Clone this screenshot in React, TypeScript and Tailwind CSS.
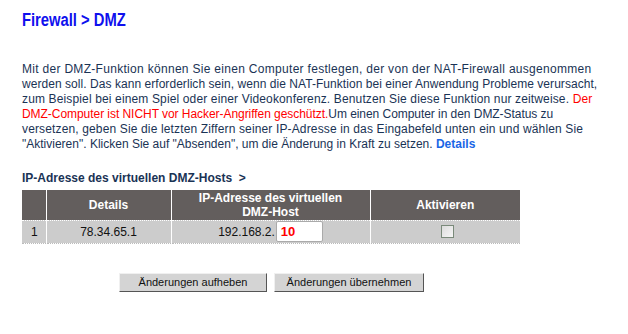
import React from "react";

export default function App() {
  return (
    <div className="w-[628px] h-[334px] bg-white overflow-hidden" style={{ fontFamily: '"Liberation Sans", Arial, sans-serif' }}>
      <div className="pl-[22px] pt-[9px]">
        <h1 className="text-[18px] leading-[22px] font-bold text-[#1010ee] origin-left scale-x-[0.82] whitespace-nowrap">Firewall &gt; DMZ</h1>
        <p className="mt-[31px] text-[12px] leading-[15px] text-[#1a3355] w-[606px] whitespace-nowrap">
          <span className="tracking-[0.3px]">Mit der DMZ-Funktion können Sie einen Computer festlegen, der von der NAT-Firewall ausgenommen</span>
          <br />
          <span className="tracking-[0.05px]">werden soll. Das kann erforderlich sein, wenn die NAT-Funktion bei einer Anwendung Probleme verursacht,</span>
          <br />
          <span className="tracking-[0.14px]">
            zum Beispiel bei einem Spiel oder einer Videokonferenz. Benutzen Sie diese Funktion nur zeitweise.{" "}
            <span className="text-[#ff0000]">Der</span>
          </span>
          <br />
          <span className="tracking-[-0.05px]">
            <span className="text-[#ff0000]">DMZ-Computer ist NICHT vor Hacker-Angriffen geschützt.</span>Um einen Computer in den DMZ-Status zu
          </span>
          <br />
          <span className="tracking-[0.14px]">versetzen, geben Sie die letzten Ziffern seiner IP-Adresse in das Eingabefeld unten ein und wählen Sie</span>
          <br />
          <span>
            "Aktivieren". Klicken Sie auf "Absenden", um die Änderung in Kraft zu setzen.{" "}
            <span className="font-bold text-[#1a66e6]">Details</span>
          </span>
        </p>
        <div className="mt-[19px] text-[12px] leading-[15px] font-bold text-[#1a3355]">
          IP-Adresse des virtuellen DMZ-Hosts&nbsp;&nbsp;&gt;
        </div>
        <table className="mt-[4px] w-[498px] border-collapse text-[12px]">
          <thead>
            <tr className="bg-[#635e5d] text-white font-bold h-[30px]">
              <th className="w-[24px] border-r border-white"></th>
              <th className="w-[125px] border-r border-white text-center leading-[14px]">Details</th>
              <th className="w-[199px] border-r border-white text-center leading-[14px] font-bold">
                IP-Adresse des virtuellen
                <br />
                DMZ-Host
              </th>
              <th className="text-center leading-[14px]">Aktivieren</th>
            </tr>
          </thead>
          <tbody>
            <tr className="bg-[#cccccc] h-[23px] text-[#111] border-t border-white border-b border-dotted border-b-[#bbbbbb]">
              <td className="border-r border-white pl-[9px]">1</td>
              <td className="border-r border-white text-center">78.34.65.1</td>
              <td className="border-r border-white">
                <div className="flex items-center justify-center">
                  <span>192.168.2.</span>
                  <div className="ml-[1px] w-[47px] h-[21px] bg-white border border-[#aaaaaa] rounded-[2px] flex items-center pl-[4px] text-[#ff0000] font-bold text-[13px]">
                    10
                  </div>
                </div>
              </td>
              <td>
                <div className="flex justify-center">
                  <div className="w-[13px] h-[13px] border border-[#7a8a7a] bg-gradient-to-br from-[#dcdcdc] to-[#f6f6f6] ml-[4px]"></div>
                </div>
              </td>
            </tr>
          </tbody>
        </table>
        <div className="mt-[29px] ml-[97px] flex gap-[7px] text-[11px] text-[#111]">
          <button className="w-[148px] h-[19px] bg-[#d4d4d4] border border-t-[#f0f0f0] border-l-[#f0f0f0] border-r-[#555] border-b-[#555] leading-[17px]">
            Änderungen aufheben
          </button>
          <button className="w-[150px] h-[19px] bg-[#d4d4d4] border border-t-[#f0f0f0] border-l-[#f0f0f0] border-r-[#555] border-b-[#555] leading-[17px]">
            Änderungen übernehmen
          </button>
        </div>
      </div>
    </div>
  );
}
